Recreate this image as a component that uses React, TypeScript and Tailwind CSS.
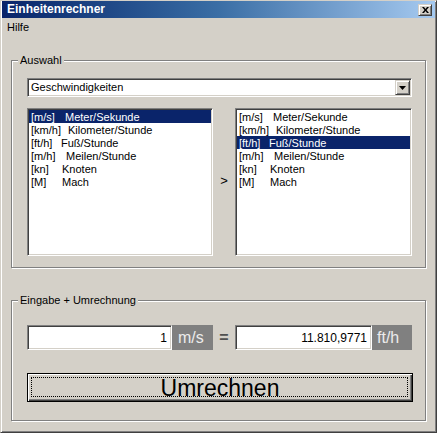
import React from "react";

const sunken =
  "border border-t-[#808080] border-l-[#808080] border-r-white border-b-white shadow-[inset_1px_1px_0_#404040,inset_-1px_-1px_0_#d4d0c8]";
const raised =
  "border border-t-[#d4d0c8] border-l-[#d4d0c8] border-r-[#404040] border-b-[#404040] shadow-[inset_1px_1px_0_#fff,inset_-1px_-1px_0_#808080]";

type Row = { code: string; name: string; w: string };
const rows: Row[] = [
  { code: "[m/s]", name: "Meter/Sekunde", w: "w-[34px]" },
  { code: "[km/h]", name: "Kilometer/Stunde", w: "w-[37px]" },
  { code: "[ft/h]", name: "Fuß/Stunde", w: "w-[30px]" },
  { code: "[m/h]", name: "Meilen/Stunde", w: "w-[35px]" },
  { code: "[kn]", name: "Knoten", w: "w-[31px]" },
  { code: "[M]", name: "Mach", w: "w-[31px]" },
];

function ListBox({ selected, width }: { selected: number; width: string }) {
  return (
    <div className={`${width} h-[148px] bg-white ${sunken} p-[1px]`}>
      <div className="flex flex-col">
        {rows.map((r, i) => (
          <div
            key={r.code}
            className={`h-[13px] leading-[14px] pl-[2px] whitespace-nowrap flex ${
              i === selected ? "bg-[#0a246a] text-white" : "text-black"
            }`}
          >
            <span className={`inline-block ${r.w}`}>{r.code}</span>
            <span>{r.name}</span>
          </div>
        ))}
      </div>
    </div>
  );
}

function GroupBox({
  label,
  className,
  children,
}: {
  label: string;
  className: string;
  children: React.ReactNode;
}) {
  return (
    <div
      className={`relative ml-[9px] w-[415px] border border-[#808080] shadow-[1px_1px_0_#fff,inset_1px_1px_0_#fff] ${className}`}
    >
      <div className="absolute left-[6px] top-[-8px] px-[2px] bg-[#d4d0c8] leading-[14px] text-[11px] text-black">
        {label}
      </div>
      {children}
    </div>
  );
}

export default function App() {
  return (
    <div
      className="w-[437px] h-[433px] bg-[#d4d0c8] border border-t-[#d4d0c8] border-l-[#d4d0c8] border-r-[#404040] border-b-[#404040] shadow-[inset_1px_1px_0_#fff,inset_-1px_-1px_0_#808080] pl-[1px] pr-[1px] flex flex-col text-[11px] text-black overflow-hidden"
      style={{ fontFamily: '"Liberation Sans", Arial, sans-serif' }}
    >
      {/* Title bar */}
      <div className="h-[17px] flex items-center justify-between bg-gradient-to-r from-[#0a246a] via-[#3a6ea5] to-[#a6caf0] pl-[5px] pr-[3px]">
        <span className="text-white font-bold text-[12px] leading-[17px]">Einheitenrechner</span>
        <div className={`w-[14px] h-[12px] bg-[#d4d0c8] ${raised} flex items-center justify-center`}>
          <svg width="7" height="6" viewBox="0 0 7 6">
            <path d="M0 0 L2 0 L3.5 2 L5 0 L7 0 L4.5 3 L7 6 L5 6 L3.5 4 L2 6 L0 6 L2.5 3 Z" fill="#000" />
          </svg>
        </div>
      </div>

      {/* Menu */}
      <div className="h-[16px] pl-[5px] pt-[2px] leading-[14px]">Hilfe</div>

      {/* Auswahl */}
      <GroupBox label="Auswahl" className="mt-[26px] h-[208px] pt-[17px] pl-[15px]">
        <div className={`w-[385px] h-[19px] bg-white ${sunken} flex items-center justify-between pl-[3px] pr-[1px]`}>
          <span className="leading-[15px]">Geschwindigkeiten</span>
          <div className={`w-[15px] h-[15px] bg-[#d4d0c8] ${raised} flex items-center justify-center`}>
            <svg width="7" height="4" viewBox="0 0 7 4">
              <path d="M0 0 L7 0 L3.5 4 Z" fill="#000" />
            </svg>
          </div>
        </div>
        <div className="mt-[11px] flex">
          <ListBox selected={0} width="w-[186px]" />
          <div className="w-[22px] flex items-center justify-center text-[13px] pb-[2px]">&gt;</div>
          <ListBox selected={2} width="w-[177px]" />
        </div>
      </GroupBox>

      {/* Eingabe + Umrechnung */}
      <GroupBox label="Eingabe + Umrechnung" className="mt-[32px] h-[121px] pt-[24px] pl-[15px]">
        <div className="flex h-[25px]">
          <div className={`w-[145px] h-[25px] bg-white ${sunken} flex items-center justify-end pr-[4px] text-[12px]`}>
            1
          </div>
          <div className="w-[41px] h-[25px] bg-[#808080] text-[#ececec] text-[16px] flex items-center pl-[6px]">
            m/s
          </div>
          <div className="w-[22px] flex items-center justify-center text-[16px] font-bold text-[#505050]">=</div>
          <div className={`w-[137px] h-[25px] bg-white ${sunken} flex items-center justify-end pr-[4px] text-[12px]`}>
            11.810,9771
          </div>
          <div className="w-[40px] h-[25px] bg-[#808080] text-[#ececec] text-[16px] flex items-center pl-[5px]">
            ft/h
          </div>
        </div>
        <div className="mt-[23px] relative w-[386px] h-[29px] border border-black bg-[#d4d0c8] shadow-[inset_1px_1px_0_#fff,inset_-1px_-1px_0_#404040,inset_-2px_-2px_0_#808080] flex items-center justify-center">
          <div className="absolute top-[3px] left-[3px] right-[4px] bottom-[4px] border border-dotted border-black" />
          <span className="text-[23px] leading-[27px] pt-[1px]">Umrechnen</span>
        </div>
      </GroupBox>
    </div>
  );
}
